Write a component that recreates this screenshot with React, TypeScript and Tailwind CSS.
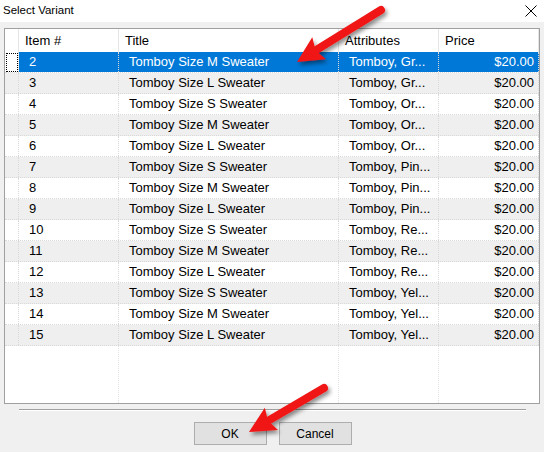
type Variant = {
  item: number;
  title: string;
  attributes: string;
  price: string;
};

const variants: Variant[] = [
  { item: 2, title: 'Tomboy Size M Sweater', attributes: 'Tomboy, Gr...', price: '$20.00' },
  { item: 3, title: 'Tomboy Size L Sweater', attributes: 'Tomboy, Gr...', price: '$20.00' },
  { item: 4, title: 'Tomboy Size S Sweater', attributes: 'Tomboy, Or...', price: '$20.00' },
  { item: 5, title: 'Tomboy Size M Sweater', attributes: 'Tomboy, Or...', price: '$20.00' },
  { item: 6, title: 'Tomboy Size L Sweater', attributes: 'Tomboy, Or...', price: '$20.00' },
  { item: 7, title: 'Tomboy Size S Sweater', attributes: 'Tomboy, Pin...', price: '$20.00' },
  { item: 8, title: 'Tomboy Size M Sweater', attributes: 'Tomboy, Pin...', price: '$20.00' },
  { item: 9, title: 'Tomboy Size L Sweater', attributes: 'Tomboy, Pin...', price: '$20.00' },
  { item: 10, title: 'Tomboy Size S Sweater', attributes: 'Tomboy, Re...', price: '$20.00' },
  { item: 11, title: 'Tomboy Size M Sweater', attributes: 'Tomboy, Re...', price: '$20.00' },
  { item: 12, title: 'Tomboy Size L Sweater', attributes: 'Tomboy, Re...', price: '$20.00' },
  { item: 13, title: 'Tomboy Size S Sweater', attributes: 'Tomboy, Yel...', price: '$20.00' },
  { item: 14, title: 'Tomboy Size M Sweater', attributes: 'Tomboy, Yel...', price: '$20.00' },
  { item: 15, title: 'Tomboy Size L Sweater', attributes: 'Tomboy, Yel...', price: '$20.00' },
];

const cell = 'h-full border-r border-dotted border-[#d9d9d9] flex items-center';

function GridRow({ v, index, selected }: { v: Variant; index: number; selected: boolean }) {
  const bg = index % 2 === 1 ? 'bg-[#efefef]' : 'bg-white';
  const sel = selected ? 'bg-[#0078d7] text-white' : '';
  return (
    <div className={`flex h-[21px] border-b border-dotted border-[#d9d9d9] ${bg}`}>
      <div className="w-[14px] h-full border-r border-dotted border-[#d9d9d9] flex items-center justify-center">
        {selected && <div className="w-[12px] h-[19px] border border-dotted border-black" />}
      </div>
      <div className={`flex flex-1 h-full ${sel}`}>
        <div className={`${cell} w-[100px] pl-[10px]`}>{v.item}</div>
        <div className={`${cell} w-[220px] pl-[10px]`}>{v.title}</div>
        <div className={`${cell} w-[100px] pl-[10px]`}>{v.attributes}</div>
        <div className={`${cell} w-[100px] justify-end pr-[4px]`}>{v.price}</div>
      </div>
    </div>
  );
}

function Arrow({ tail, tip }: { tail: [number, number]; tip: [number, number] }) {
  const dx = tip[0] - tail[0];
  const dy = tip[1] - tail[1];
  const len = Math.hypot(dx, dy);
  const ux = dx / len;
  const uy = dy / len;
  const bx = tip[0] - 26 * ux;
  const by = tip[1] - 26 * uy;
  const nx = -uy;
  const ny = ux;
  const head = `${tip[0]},${tip[1]} ${bx + 13 * nx},${by + 13 * ny} ${bx + 4 * ux},${by + 4 * uy} ${bx - 13 * nx},${by - 13 * ny}`;
  return (
    <g filter="url(#arrowShadow)">
      <line x1={tail[0]} y1={tail[1]} x2={bx + 6 * ux} y2={by + 6 * uy} stroke="#f01414" strokeWidth={8} strokeLinecap="round" />
      <polygon points={head} fill="#f01414" />
    </g>
  );
}

export default function App() {
  return (
    <div className="relative w-[544px] h-[452px] bg-[#f0f0f0] text-[13px] text-black overflow-hidden" style={{ fontFamily: '"Liberation Sans", Arial, sans-serif' }}>
      {/* title bar */}
      <div className="h-[22px] bg-white flex items-center justify-between pl-[3px] pr-[7px]">
        <span className="text-[11.5px]">Select Variant</span>
        <svg width="12" height="12" viewBox="0 0 12 12">
          <path d="M0.5 0.5 L11.5 11.5 M11.5 0.5 L0.5 11.5" stroke="#000" strokeWidth={1} />
        </svg>
      </div>

      {/* grid */}
      <div className="mt-[6px] ml-[4px] w-[536px] h-[376px] border border-[#a0a0a0] bg-white flex flex-col">
        <div className="flex h-[23px] bg-white">
          <div className="w-[14px] h-full border-r border-[#e5e5e5]" />
          <div className="w-[100px] h-full border-r border-[#e5e5e5] pl-[6px] flex items-center">Item #</div>
          <div className="w-[220px] h-full border-r border-[#e5e5e5] pl-[6px] flex items-center">Title</div>
          <div className="w-[100px] h-full border-r border-[#e5e5e5] pl-[6px] flex items-center">Attributes</div>
          <div className="w-[100px] h-full border-r border-[#e5e5e5] pl-[6px] flex items-center">Price</div>
        </div>
        {variants.map((v, i) => (
          <GridRow key={v.item} v={v} index={i} selected={i === 0} />
        ))}
        <div className="flex flex-1">
          <div className="w-[14px] h-full" />
          <div className="w-[100px] h-full border-r border-dotted border-[#e3e3e3]" />
          <div className="w-[220px] h-full border-r border-dotted border-[#e3e3e3]" />
          <div className="w-[100px] h-full border-r border-dotted border-[#e3e3e3]" />
          <div className="w-[100px] h-full" />
        </div>
      </div>

      {/* separator */}
      <div className="mt-[5px] ml-[19px] w-[507px] border-t border-[#a0a0a0] border-b border-b-white" />

      {/* buttons */}
      <div className="mt-[11px] flex justify-center gap-[12px] pl-[1px]">
        <button className="w-[73px] h-[23px] bg-[#e1e1e1] border border-[#adadad] text-[12px]">OK</button>
        <button className="w-[73px] h-[23px] bg-[#e1e1e1] border border-[#adadad] text-[12px]">Cancel</button>
      </div>

      {/* annotation arrows */}
      <svg className="absolute inset-0 pointer-events-none" width="544" height="452" viewBox="0 0 544 452">
        <defs>
          <filter id="arrowShadow" x="-20%" y="-20%" width="140%" height="140%">
            <feDropShadow dx="2" dy="3" stdDeviation="2" floodColor="#000" floodOpacity="0.45" />
          </filter>
        </defs>
        <Arrow tail={[381, 10]} tip={[297, 62]} />
        <Arrow tail={[324, 388]} tip={[249, 432]} />
      </svg>
    </div>
  );
}
